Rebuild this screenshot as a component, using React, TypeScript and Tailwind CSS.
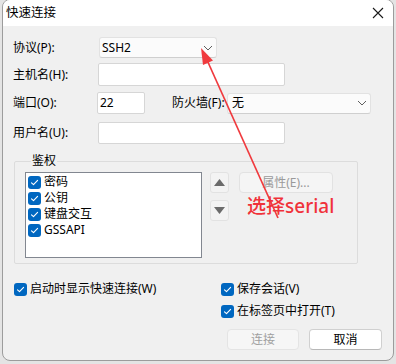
import type { ReactNode } from "react";

const font = { fontFamily: '"Noto Sans", "Noto Sans CJK SC", sans-serif' };

function Check({ label, muted = false }: { label: ReactNode; muted?: boolean }) {
  return (
    <label className="flex h-4 items-center gap-[3px] leading-none">
      <span className="grid h-[13px] w-[13px] shrink-0 place-items-center rounded-[3px] bg-[#0067c0]">
        <svg width="9" height="9" viewBox="0 0 9 9" fill="none">
          <path d="M1.5 4.8 3.5 6.7 7.6 2.3" stroke="#fff" strokeWidth="1.1" strokeLinecap="round" strokeLinejoin="round" />
        </svg>
      </span>
      <span className={muted ? "text-[#a0a0a0]" : "text-black"}>{label}</span>
    </label>
  );
}

function Chevron() {
  return (
    <svg width="10" height="6" viewBox="0 0 10 6" fill="none">
      <path d="M1 1l4 4 4-4" stroke="#5f5f5f" strokeWidth="1" />
    </svg>
  );
}

function Triangle({ down = false }: { down?: boolean }) {
  return (
    <svg width="11" height="7" viewBox="0 0 11 7">
      <path d={down ? "M0 0h11L5.5 7z" : "M0 7h11L5.5 0z"} fill="#6b6b6b" />
    </svg>
  );
}

export default function App() {
  return (
    <div className="relative h-[364px] w-[396px] overflow-hidden bg-[#e4e4e4] text-[12px] text-black" style={font}>
      <div className="-mt-px ml-[2px] flex h-[362px] w-[392px] flex-col overflow-hidden rounded-[8px] border border-[#9c9c9c] bg-[#f0f0f0]">
        {/* title bar */}
        <div className="flex h-[26px] shrink-0 items-center justify-between bg-white pl-[3px] pr-[9px]">
          <span className="text-[12.5px]">快速连接</span>
          <svg width="12" height="12" viewBox="0 0 12 12">
            <path d="M1 1l10 10M11 1 1 11" stroke="#1a1a1a" strokeWidth="1.1" />
          </svg>
        </div>

        <div className="flex flex-1 flex-col pl-[10px] pr-[10px] pt-[11px]">
          {/* protocol */}
          <div className="flex h-[21px] items-center">
            <span className="w-[86px]">协议(P):</span>
            <div className="flex h-[21px] w-[118px] items-center justify-between rounded-[3px] border border-[#e2e2e2] border-b-[#cfcfcf] bg-[#fbfbfb] pl-[2px] pr-[3px]">
              <span>SSH2</span>
              <Chevron />
            </div>
          </div>

          {/* host */}
          <div className="mt-[5px] flex h-[23px] items-center">
            <span className="w-[85px]">主机名(H):</span>
            <div className="h-[23px] w-[187px] rounded-[2px] border border-[#d6d6d6] bg-white" />
          </div>

          {/* port / firewall */}
          <div className="mt-[6px] flex h-[22px] items-center">
            <span className="w-[84px]">端口(O):</span>
            <div className="flex h-[22px] w-[48px] items-center rounded-[2px] border border-[#d6d6d6] bg-white pl-[2px]">22</div>
            <span className="ml-[27px] w-[55px]">防火墙(F):</span>
            <div className="flex h-[21px] w-[144px] items-center justify-between rounded-[3px] border border-[#e2e2e2] border-b-[#cfcfcf] bg-[#fbfbfb] pl-[4px] pr-[3px]">
              <span>无</span>
              <Chevron />
            </div>
          </div>

          {/* user */}
          <div className="mt-[8px] flex h-[22px] items-center">
            <span className="w-[85px]">用户名(U):</span>
            <div className="h-[22px] w-[187px] rounded-[2px] border border-[#d6d6d6] bg-white" />
          </div>

          {/* auth group */}
          <fieldset className="ml-px mt-[9px] w-[344px] rounded-[2px] border border-[#dcdcdc] pb-[5px] pl-[10px]">
            <legend className="ml-[6px] px-[1px] leading-[16px]">鉴权</legend>
            <div className="mt-[3px] flex items-start">
              <div className="flex h-[86px] w-[177px] flex-col border border-[#828790] bg-white pl-[2px] pt-[1px]">
                <Check label="密码" />
                <Check label="公钥" />
                <Check label="键盘交互" />
                <Check label="GSSAPI" />
              </div>
              <div className="ml-[8px] flex flex-col gap-[7px]">
                <div className="grid h-[21px] w-[19px] place-items-center rounded-[3px] border border-[#e2e2e2] bg-[#f3f3f3]">
                  <Triangle />
                </div>
                <div className="grid h-[21px] w-[19px] place-items-center rounded-[3px] border border-[#e2e2e2] bg-[#f3f3f3]">
                  <Triangle down />
                </div>
              </div>
              <div className="ml-[10px] grid h-[21px] w-[94px] place-items-center rounded-[4px] border border-[#e2e2e2] bg-[#f5f5f5] text-[#9a9a9a]">
                属性(E)...
              </div>
            </div>
          </fieldset>

          {/* options */}
          <div className="mt-[17px] grid grid-cols-[207px_1fr] gap-y-[6px] pl-px">
            <Check label="启动时显示快速连接(W)" />
            <Check label="保存会话(V)" />
            <span />
            <Check label="在标签页中打开(T)" />
          </div>

          {/* buttons */}
          <div className="mt-[10px] flex justify-end gap-[10px] pr-px">
            <div className="grid h-[21px] w-[72px] place-items-center rounded-[4px] border border-[#e4e4e4] bg-[#f6f6f6] text-[#a0a0a0]">
              连接
            </div>
            <div className="grid h-[21px] w-[73px] place-items-center rounded-[4px] border border-[#d0d0d0] border-b-[#b8b8b8] bg-white">
              取消
            </div>
          </div>
        </div>
      </div>

      {/* annotation overlay */}
      <svg className="pointer-events-none absolute left-0 top-0" width="396" height="364">
        <line x1="278" y1="218" x2="207" y2="60" stroke="#f03a3e" strokeWidth="1.7" />
        <path d="M201 48 L213 60.5 L203 65 Z" fill="#f03a3e" />
      </svg>
      <span
        className="pointer-events-none absolute left-[247px] top-[194px] text-[19px] font-medium leading-[24px] text-[#f0323a]"
        style={font}
      >
        选择serial
      </span>
    </div>
  );
}
